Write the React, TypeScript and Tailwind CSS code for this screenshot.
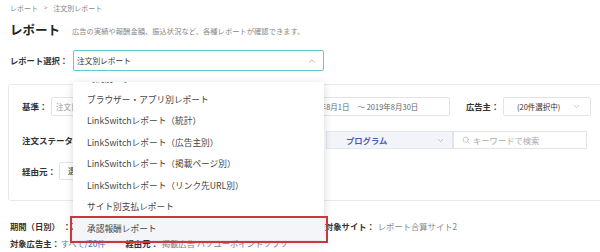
import { ChevronUp, ChevronDown, Search } from "lucide-react";

const items = [
  "ブラウザー・アプリ別レポート",
  "LinkSwitchレポート（統計）",
  "LinkSwitchレポート（広告主別）",
  "LinkSwitchレポート（掲載ページ別）",
  "LinkSwitchレポート（リンク先URL別）",
  "サイト別支払レポート",
  "承認報酬レポート",
];

export default function App() {
  return (
    <div className="relative w-[600px] h-[252px] overflow-hidden bg-white font-['Noto_Sans_CJK_JP',sans-serif] text-[#333]">
      <div className="pl-[8px]">
        {/* breadcrumb */}
        <div className="h-[16px] pl-[2px] flex items-center gap-[6px] text-[7px] text-[#888] leading-none">
          <span>レポート</span>
          <span className="text-[6px]">&gt;</span>
          <span>注文別レポート</span>
        </div>
        {/* title */}
        <div className="h-[28px] pl-[2px] flex items-center gap-[12px]">
          <span className="text-[12.5px] font-bold leading-none text-[#222]">レポート</span>
          <span className="text-[7.3px] text-[#888] leading-none mt-[4px]">
            広告の実績や報酬金額、振込状況など、各種レポートが確認できます。
          </span>
        </div>
        {/* report select */}
        <div className="mt-[6px] pl-[2px] flex items-center gap-[5px] h-[21px]">
          <span className="text-[8.3px] font-bold leading-none text-[#333] w-[58px] whitespace-nowrap">レポート選択：</span>
          <div className="w-[251px] h-[21px] border-[1.5px] border-[#5fcaca] rounded-[2px] flex items-center justify-between pl-[3px] pr-[6px]">
            <span className="text-[7.7px] leading-none text-[#333]">注文別レポート</span>
            <ChevronUp size={10} strokeWidth={1.5} color="#999" />
          </div>
        </div>
        {/* card */}
        <div className="mt-[13px] w-[600px] h-[117px] border border-[#e8e8e8] rounded-[3px] pt-[12px] pl-[13px]">
          {/* row 1 */}
          <div className="flex items-center h-[19px]">
            <span className="text-[8.5px] font-bold leading-none w-[29px] whitespace-nowrap">基準：</span>
            <div className="w-[399px] h-[19px] border border-[#e3e3e3] rounded-[2px] flex items-center">
              <div className="w-[240px] h-full flex items-center justify-between pl-[4px] pr-[6px] border-r border-[#e3e3e3]">
                <span className="text-[7.5px] text-[#999] leading-none">注文日</span>
                <ChevronDown size={9} strokeWidth={1.5} color="#aaa" />
              </div>
              <span className="pl-[10px] text-[7.5px] text-[#666] leading-none">2019年8月1日</span>
              <span className="pl-[8px] text-[7.5px] text-[#666] leading-none">〜 2019年8月30日</span>
            </div>
            <span className="ml-[16px] text-[8.3px] font-bold leading-none w-[37px] whitespace-nowrap">広告主：</span>
            <div className="w-[88px] h-[19px] border border-[#e3e3e3] rounded-[2px] flex items-center justify-between pl-[13px] pr-[9px]">
              <span className="text-[7.5px] text-[#333] leading-none">(20件選択中)</span>
              <ChevronDown size={9} strokeWidth={1.5} color="#aaa" />
            </div>
          </div>
          {/* row 2 */}
          <div className="flex items-center h-[18px] mt-[15px]">
            <span className="text-[8.5px] font-bold leading-none w-[304px] whitespace-nowrap">注文ステータス：</span>
            <div className="w-[127px] h-[18px] bg-[#f2f4f9] border border-[#e3e6ee] flex items-center justify-between pl-[19px] pr-[7px]">
              <span className="text-[8.3px] font-bold text-[#4a5ab0] leading-none">プログラム</span>
              <ChevronDown size={9} strokeWidth={1.5} color="#999" />
            </div>
            <div className="w-[134px] h-[18px] border border-[#e3e3e3] flex items-center pl-[8px] gap-[3px]">
              <Search size={8} strokeWidth={1.8} color="#aaa" />
              <span className="text-[8.3px] text-[#aaa] leading-none">キーワードで検索</span>
            </div>
          </div>
          {/* row 3 */}
          <div className="flex items-center h-[18px] mt-[13px]">
            <span className="text-[8.5px] font-bold leading-none w-[37px] whitespace-nowrap">経由元：</span>
            <div className="w-[200px] h-[18px] border border-[#e3e3e3] rounded-[2px] flex items-center pl-[8px]">
              <span className="text-[8px] text-[#333] leading-none">選択</span>
            </div>
          </div>
        </div>
        {/* summary */}
        <div className="mt-[19px] pl-[2px] grid grid-cols-[315px_1fr] gap-y-[4px] text-[8.3px] leading-none">
          <div className="h-[13px] flex items-center">
            <span className="font-bold">期間（日別）</span>
            <span className="ml-[3px] font-bold">：</span>
            <span className="text-[#777]">2019年8月1日</span>
          </div>
          <div className="h-[13px] flex items-center">
            <span className="font-bold">対象サイト：</span>
            <span className="ml-[3px] text-[#888]">レポート合算サイト2</span>
          </div>
          <div className="h-[13px] flex items-center col-span-2">
            <span className="font-bold">対象広告主：</span>
            <span className="ml-[1px] text-[#3b7dd8]">すべて/20件</span>
            <span className="ml-[20px] font-bold">経由元：</span>
            <span className="ml-[3px] text-[#888]">掲載広告 ハソユーポイントソフソ</span>
          </div>
        </div>
      </div>

      {/* dropdown */}
      <div className="absolute left-[73px] top-[82px] w-[251px] h-[158px] bg-white rounded-[2px] shadow-[0_2px_9px_rgba(0,0,0,0.16)] overflow-hidden">
        <div className="mt-[-11.75px] h-[19px] pl-[14px] flex items-center text-[8.7px] leading-none text-[#444]">
          時間別レポート
        </div>
        {items.map((t, i) => (
          <div
            key={t}
            className={
              i === items.length - 1
                ? "h-[21.5px] pl-[14px] flex items-center bg-[#f3f5f9] text-[8.7px] leading-none text-[#444]"
                : "h-[21.5px] pl-[14px] flex items-center text-[8.7px] leading-none text-[#444]"
            }
          >
            {t}
          </div>
        ))}
      </div>
      {/* annotation box */}
      <div className="absolute left-[70px] top-[216px] w-[258px] h-[27px] border-2 border-[#c8393f]" />
    </div>
  );
}
